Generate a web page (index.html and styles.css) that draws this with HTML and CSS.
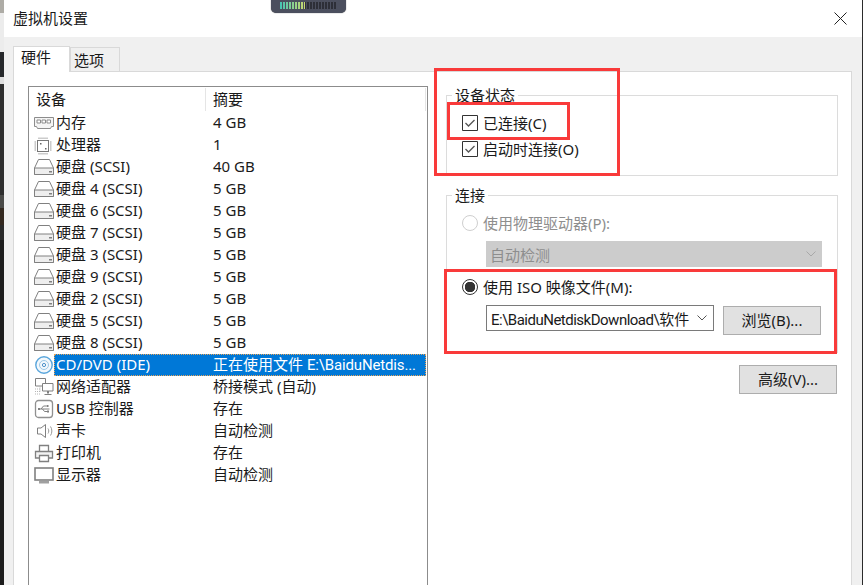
FILE: index.html
```html
<!DOCTYPE html>
<html lang="zh-CN">
<head>
  <meta charset="UTF-8">
  <title>虚拟机设置</title>
  <link rel="stylesheet" href="styles.css">
</head>
<body>
  <svg class="defs" width="0" height="0">
    <symbol id="i-mem" viewBox="0 0 20 22">
      <path d="M.5 5.500h19v9h-2l-1 2h-13l-1-2h-2z" fill="#f4f4f4" stroke="#8c8c8c"/>
      <path d="M3 8h3.500v3H3zM8 8h3.500v3H8zM13 8h3.500v3H13z" fill="#fff" stroke="#8c8c8c"/>
    </symbol>
    <symbol id="i-cpu" viewBox="0 0 20 22">
      <rect x="3.500" y="6.500" width="11" height="11" fill="#fff" stroke="#777"/>
      <path d="M5 5v-1.500M7 5v-1.500M9 5v-1.500M11 5v-1.500M13 5v-1.500M5 20.500V19M7 20.500V19M9 20.500V19M11 20.500V19M13 20.500V19M.5 8H2M.5 10H2M.5 12H2M.5 14H2M.5 16H2M16 8h1.500M16 10h1.500M16 12h1.500M16 14h1.500M16 16h1.500" stroke="#999"/>
      <path d="M6 9h1.500v1.500H6zM11 14h1.500v1.500H11z" fill="#666"/>
    </symbol>
    <symbol id="i-disk" viewBox="0 0 20 22">
      <path d="M4.500 3.500h11l4 8.500v6.500H.5V12z" fill="#fff" stroke="#808080"/>
      <path d="M.5 12h19v6.500H.5z" fill="#eee" stroke="#808080"/>
      <path d="M15 15h3v1.500h-3z" fill="#808080"/>
    </symbol>
    <symbol id="i-cd" viewBox="0 0 20 22">
      <circle cx="10" cy="11" r="8.200" fill="#f3f8fc" stroke="#5aa6dc" stroke-width="1.400"/>
      <circle cx="10" cy="11" r="4.500" fill="none" stroke="#9cc8e6"/>
      <circle cx="10" cy="11" r="1.600" fill="#fff" stroke="#4a90c8"/>
    </symbol>
    <symbol id="i-net" viewBox="0 0 20 22">
      <path d="M1.500 2.500h10v7.500h-10z" fill="#fff" stroke="#808080"/>
      <path d="M8.500 7.500h10.500v7.500H8.500z" fill="#fff" stroke="#808080"/>
      <path d="M13 15h2v2.500h-2zM10.500 18h7v1h-7z" fill="#808080"/>
      <path d="M6 10.500v5M1 13h5M1 15.500h5M1 18h6" stroke="#b5b5b5" stroke-dasharray="1 1"/>
    </symbol>
    <symbol id="i-usb" viewBox="0 0 20 22">
      <rect x="1.500" y="2.500" width="17" height="17" rx="3" fill="#fff" stroke="#909090" stroke-width="1.300"/>
      <path d="M4.500 11h11M7 11l2.500-3h2.500M8.500 11l2 2.500h2.500" fill="none" stroke="#808080"/>
      <path d="M4 10h2v2H4zM12.500 7h2v2h-2zM13 12.500h2v2h-2z" fill="#808080"/>
    </symbol>
    <symbol id="i-snd" viewBox="0 0 20 22">
      <path d="M3.500 8h3.500l4.500-3.500v13L7 14H3.500z" fill="#fff" stroke="#808080"/>
      <path d="M14 8.500c1 1.500 1 3.500 0 5M16.500 6.500c1.800 2.500 1.800 6.500 0 9" fill="none" stroke="#999"/>
    </symbol>
    <symbol id="i-prn" viewBox="0 0 20 22">
      <path d="M5.500 9V3.500h9V9" fill="#fff" stroke="#808080" stroke-width="1.300"/>
      <path d="M5 16H1.500V9.500h17V16H15" fill="#f2f2f2" stroke="#808080" stroke-width="1.300"/>
      <path d="M5.500 13.500h9v6h-9z" fill="#fff" stroke="#808080" stroke-width="1.300"/>
    </symbol>
    <symbol id="i-mon" viewBox="0 0 20 22">
      <rect x="1" y="4" width="18" height="12" fill="#fff" stroke="#808080" stroke-width="1.600"/>
      <path d="M5 17h10v2.500H5z" fill="#a0a0a0"/>
    </symbol>
    <symbol id="i-check" viewBox="0 0 16 16">
      <path d="M.5.500h15v15H.5z" fill="#fff" stroke="#333"/>
      <path d="M3.500 8l3 3 6-6" fill="none" stroke="#555" stroke-width="1.300"/>
    </symbol>
    <symbol id="i-chev" viewBox="0 0 10 6">
      <path d="M.5.500L5 5 9.500.5" fill="none" stroke="currentColor"/>
    </symbol>
  </svg>

  <div class="strip"></div>

  <div class="dialog">
    <div class="titlebar">
      <span>虚拟机设置</span>
      <svg class="close" width="13" height="13" viewBox="0 0 13 13"><path d="M.5.500l12 12M12.500.500l-12 12" stroke="#222"/></svg>
    </div>

    <div class="tabs">
      <div class="tab active">硬件</div>
      <div class="tab">选项</div>
    </div>

    <div class="panel">
      <div class="list">
        <div class="list-head">
          <div class="col-dev">设备</div>
          <div class="col-sum">摘要</div>
        </div>
        <div class="row"><svg class="ico"><use href="#i-mem"/></svg><div class="cell"><span class="name">内存</span><span>4 GB</span></div></div>
        <div class="row"><svg class="ico"><use href="#i-cpu"/></svg><div class="cell"><span class="name">处理器</span><span>1</span></div></div>
        <div class="row"><svg class="ico"><use href="#i-disk"/></svg><div class="cell"><span class="name">硬盘 (SCSI)</span><span>40 GB</span></div></div>
        <div class="row"><svg class="ico"><use href="#i-disk"/></svg><div class="cell"><span class="name">硬盘 4 (SCSI)</span><span>5 GB</span></div></div>
        <div class="row"><svg class="ico"><use href="#i-disk"/></svg><div class="cell"><span class="name">硬盘 6 (SCSI)</span><span>5 GB</span></div></div>
        <div class="row"><svg class="ico"><use href="#i-disk"/></svg><div class="cell"><span class="name">硬盘 7 (SCSI)</span><span>5 GB</span></div></div>
        <div class="row"><svg class="ico"><use href="#i-disk"/></svg><div class="cell"><span class="name">硬盘 3 (SCSI)</span><span>5 GB</span></div></div>
        <div class="row"><svg class="ico"><use href="#i-disk"/></svg><div class="cell"><span class="name">硬盘 9 (SCSI)</span><span>5 GB</span></div></div>
        <div class="row"><svg class="ico"><use href="#i-disk"/></svg><div class="cell"><span class="name">硬盘 2 (SCSI)</span><span>5 GB</span></div></div>
        <div class="row"><svg class="ico"><use href="#i-disk"/></svg><div class="cell"><span class="name">硬盘 5 (SCSI)</span><span>5 GB</span></div></div>
        <div class="row"><svg class="ico"><use href="#i-disk"/></svg><div class="cell"><span class="name">硬盘 8 (SCSI)</span><span>5 GB</span></div></div>
        <div class="row selected"><svg class="ico"><use href="#i-cd"/></svg><div class="cell"><span class="name">CD/DVD (IDE)</span><span>正在使用文件 <span class="path-short">E:\BaiduNetdis...</span></span></div></div>
        <div class="row"><svg class="ico"><use href="#i-net"/></svg><div class="cell"><span class="name">网络适配器</span><span>桥接模式 (自动)</span></div></div>
        <div class="row"><svg class="ico"><use href="#i-usb"/></svg><div class="cell"><span class="name">USB 控制器</span><span>存在</span></div></div>
        <div class="row"><svg class="ico"><use href="#i-snd"/></svg><div class="cell"><span class="name">声卡</span><span>自动检测</span></div></div>
        <div class="row"><svg class="ico"><use href="#i-prn"/></svg><div class="cell"><span class="name">打印机</span><span>存在</span></div></div>
        <div class="row"><svg class="ico"><use href="#i-mon"/></svg><div class="cell"><span class="name">显示器</span><span>自动检测</span></div></div>
      </div>

      <div class="side">
        <fieldset class="group group-state">
          <legend>设备状态</legend>
          <div class="opt"><svg class="box"><use href="#i-check"/></svg><span class="lbl">已连接(C)</span></div>
          <div class="opt"><svg class="box"><use href="#i-check"/></svg><span class="lbl">启动时连接(O)</span></div>
        </fieldset>

        <fieldset class="group group-conn">
          <legend>连接</legend>
          <div class="opt disabled"><span class="radio"></span><span class="lbl">使用物理驱动器(P):</span></div>
          <div class="combo combo-off">自动检测<svg class="chev"><use href="#i-chev"/></svg></div>
          <div class="opt opt-iso"><span class="radio on"></span><span class="lbl">使用 ISO 映像文件(M):</span></div>
          <div class="file-row">
            <div class="combo combo-file"><span><span class="path">E:\BaiduNetdiskDownload\</span>软件</span><svg class="chev"><use href="#i-chev"/></svg></div>
            <div class="btn">浏览(B)...</div>
          </div>
        </fieldset>

        <div class="btn btn-adv">高级(V)...</div>
      </div>
    </div>
  </div>

  <!-- taskbar meter peeking out behind the dialog -->
  <div class="meter"><div class="leds"><div class="leds-on"></div></div></div>

  <!-- annotations drawn on the screenshot -->
  <div class="mark mark-state"></div>
  <div class="mark mark-conn"></div>
  <div class="mark mark-iso"></div>
</body>
</html>
```

FILE: styles.css
```css
* {
  box-sizing: border-box;
}
html, body {
  height: 100%;
}
body {
  margin: 0;
  display: flex;
  overflow: hidden;
  font-family: "Noto Sans", "Noto Sans CJK SC", sans-serif;
  font-size: 15px;
  color: #1a1a1a;
  background: #2b2b2b;
}
.defs {
  position: absolute;
}
.strip {
  width: 4px;
  flex: none;
  background: linear-gradient(to bottom,
    #aeaca6 0, #aeaca6 13px, #ececec 13px, #ececec 52px,
    #26282b 52px, #26282b 77px, #dedede 77px, #dedede 84px,
    #2e2e2e 84px, #2e2e2e 195px, #4a4a48 195px, #4a4a48 208px,
    #33281f 208px, #33281f 225px, #2a2a2a 225px, #2a2a2a 240px,
    #1c1c1c 240px);
}
.dialog {
  width: 858px;
  flex: none;
  background: #f0f0f0;
}
.titlebar {
  height: 37px;
  padding: 0 15px 0 9px;
  display: flex;
  align-items: center;
  justify-content: space-between;
  background: #fff;
  line-height: 37px;
}
.close {
  flex: none;
}
.tabs {
  display: flex;
  align-items: flex-end;
  height: 34px;
  padding-left: 9px;
}
.tab {
  height: 24px;
  width: 50px;
  margin-left: -1px;
  padding-left: 3px;
  border: 1px solid #d9d9d9;
  border-bottom: none;
  line-height: 24px;
}
.tab.active {
  width: 57px;
  height: 26px;
  margin-left: 0;
  margin-right: 1px;
  padding-left: 7px;
  background: #fff;
  line-height: 20px;
  margin-bottom: -1px;
  z-index: 1;
}
.panel {
  display: flex;
  width: 839px;
  height: 530px;
  margin-left: 9px;
  padding: 14px 0 0 14px;
  background: #fff;
  border: 1px solid #d9d9d9;
}
.list {
  width: 400px;
  height: 520px;
  flex: none;
  border: 1px solid #8c8c8c;
}
.list-head {
  display: flex;
  height: 25px;
}
.col-dev {
  width: 177px;
  height: 23px;
  margin-top: 1px;
  padding-left: 7px;
  border-right: 1px solid #e5e5e5;
  line-height: 22px;
}
.col-sum {
  width: 220px;
  height: 23px;
  margin-top: 1px;
  padding-left: 7px;
  border-right: 1px solid #e5e5e5;
  line-height: 22px;
}
.row {
  display: flex;
  height: 22px;
  padding-left: 5px;
}
.ico {
  width: 20px;
  height: 22px;
  flex: none;
}
.cell {
  flex: 1;
  display: flex;
  margin-right: 1px;
  padding-left: 3px;
  line-height: 21px;
  white-space: nowrap;
}
.name {
  width: 157px;
  margin-left: -1px;
  flex: none;
}
.selected .cell {
  background: #0078d7;
  color: #fff;
  outline: 1px dotted #e8a55a;
  outline-offset: -1px;
}
.path-short {
  font-family: Roboto, sans-serif;
  letter-spacing: -0.15px;
}
.side {
  width: 392px;
  margin-left: 18px;
  flex: none;
}
.group {
  margin: 0;
  padding: 6px 15px 0;
  border: 1px solid #dcdcdc;
  min-width: 0;
}
.group legend {
  padding: 0 3px;
  margin-left: -10px;
  line-height: 18px;
}
.group-state {
  height: 90px;
}
.group-conn {
  height: 167px;
  margin-top: 10px;
}
.opt {
  display: flex;
  align-items: center;
  height: 26px;
  white-space: nowrap;
}
.lbl {
  margin-top: -2px;
}
.opt.disabled {
  color: #8e8e8e;
}
.opt-iso {
  margin-top: 7px;
}
.box {
  width: 16px;
  height: 16px;
  margin-right: 5px;
  flex: none;
}
.radio {
  width: 16px;
  height: 16px;
  margin-right: 5px;
  flex: none;
  border: 1px solid #cfcfcf;
  border-radius: 50%;
  background: #fff;
}
.radio.on {
  border-color: #333;
  background: radial-gradient(circle, #333 0, #333 5px, #fff 5.500px);
}
.combo {
  display: flex;
  align-items: center;
  justify-content: space-between;
  height: 26px;
  margin-left: 24px;
  padding: 0 6px 0 4px;
  white-space: nowrap;
}
.combo-off {
  width: 336px;
  margin-top: 5px;
  background: #ccc;
  color: #8e8e8e;
}
.combo-off .chev {
  color: #a8a8a8;
}
.combo-file {
  width: 228px;
  flex: none;
  background: #fff;
  border: 1px solid #7a7a7a;
}
.path {
  font-family: Roboto, sans-serif;
  letter-spacing: -0.5px;
}
.chev {
  width: 10px;
  height: 6px;
  flex: none;
  color: #555;
}
.file-row {
  display: flex;
  align-items: flex-start;
  margin-top: 5px;
}
.btn {
  width: 98px;
  height: 29px;
  flex: none;
  background: #e1e1e1;
  border: 1px solid #adadad;
  text-align: center;
  line-height: 27px;
}
.file-row .btn {
  margin: 1px 0 0 9px;
}
.btn-adv {
  margin: 12px 1px 0 auto;
}
.meter {
  position: absolute;
  left: 271px;
  top: 0;
  width: 75px;
  height: 13px;
  padding: 2px 9px 0;
  background: #4b4f5e;
  border-radius: 0 0 5px 5px;
  box-shadow: 0 0 1px #333;
}
.leds {
  height: 7px;
  background: repeating-linear-gradient(90deg, #2d2f38 0, #2d2f38 2px, #4b4f5e 2px, #4b4f5e 3px);
}
.leds-on {
  width: 25px;
  height: 7px;
  background: repeating-linear-gradient(90deg, transparent 0, transparent 2px, #4b4f5e 2px, #4b4f5e 3px),
    linear-gradient(90deg, #45c4b4, #c8d96e);
}
.mark {
  position: absolute;
  border: 3px solid #f93a3a;
}
.mark-state {
  left: 434px;
  top: 68px;
  width: 186px;
  height: 108px;
}
.mark-conn {
  left: 447px;
  top: 102px;
  width: 123px;
  height: 38px;
}
.mark-iso {
  left: 444px;
  top: 269px;
  width: 393px;
  height: 85px;
}
```
